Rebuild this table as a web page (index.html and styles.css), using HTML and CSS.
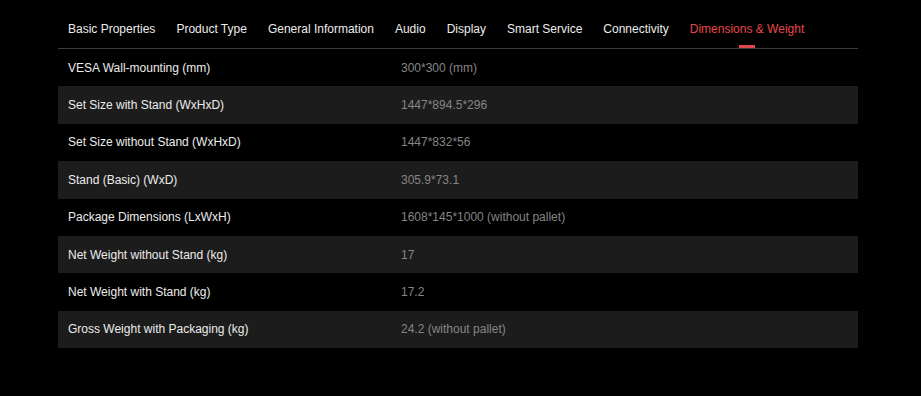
FILE: index.html
```html
<!DOCTYPE html>
<html lang="en">
<head>
<meta charset="utf-8">
<title>Specifications</title>
<link rel="stylesheet" href="styles.css">
</head>
<body>
<div class="specs">
  <nav class="tabs">
    <span class="tab">Basic Properties</span>
    <span class="tab">Product Type</span>
    <span class="tab">General Information</span>
    <span class="tab">Audio</span>
    <span class="tab">Display</span>
    <span class="tab">Smart Service</span>
    <span class="tab">Connectivity</span>
    <span class="tab active">Dimensions &amp; Weight</span>
  </nav>
  <div class="table">
    <div class="row"><span class="label">VESA Wall-mounting (mm)</span><span class="value">300*300 (mm)</span></div>
    <div class="row"><span class="label">Set Size with Stand (WxHxD)</span><span class="value">1447*894.5*296</span></div>
    <div class="row"><span class="label">Set Size without Stand (WxHxD)</span><span class="value">1447*832*56</span></div>
    <div class="row"><span class="label">Stand (Basic) (WxD)</span><span class="value">305.9*73.1</span></div>
    <div class="row"><span class="label">Package Dimensions (LxWxH)</span><span class="value">1608*145*1000 (without pallet)</span></div>
    <div class="row"><span class="label">Net Weight without Stand (kg)</span><span class="value">17</span></div>
    <div class="row"><span class="label">Net Weight with Stand (kg)</span><span class="value">17.2</span></div>
    <div class="row"><span class="label">Gross Weight with Packaging (kg)</span><span class="value">24.2 (without pallet)</span></div>
  </div>
</div>
</body>
</html>
```
FILE: styles.css
```css
html, body {
  margin: 0;
  padding: 0;
  background: #000;
}
body {
  font-family: "Liberation Sans", Arial, sans-serif;
  font-size: 12px;
  color: #e8e8e8;
}
.specs {
  width: 800px;
  margin-left: 58px;
  padding-top: 0;
}
.tabs {
  display: flex;
  gap: 21px;
  padding-left: 10px;
  height: 48px;
  border-bottom: 1px solid #3a3a3a;
  box-sizing: content-box;
}
.tab {
  position: relative;
  line-height: 58px;
  height: 48px;
  color: #ececec;
  white-space: nowrap;
}
.tab.active {
  color: #e8474b;
}
.tab.active::after {
  content: "";
  position: absolute;
  left: 50%;
  bottom: 0;
  width: 16px;
  height: 3px;
  margin-left: -8px;
  background: #e0474b;
}
.row {
  display: grid;
  grid-template-columns: 333px 1fr;
  align-items: center;
  height: 37.4px;
}
.row:nth-child(even) {
  background: #1c1c1c;
}
.label {
  padding-left: 10px;
  color: #ececec;
}
.value {
  padding-left: 10px;
  color: #858585;
}
```
